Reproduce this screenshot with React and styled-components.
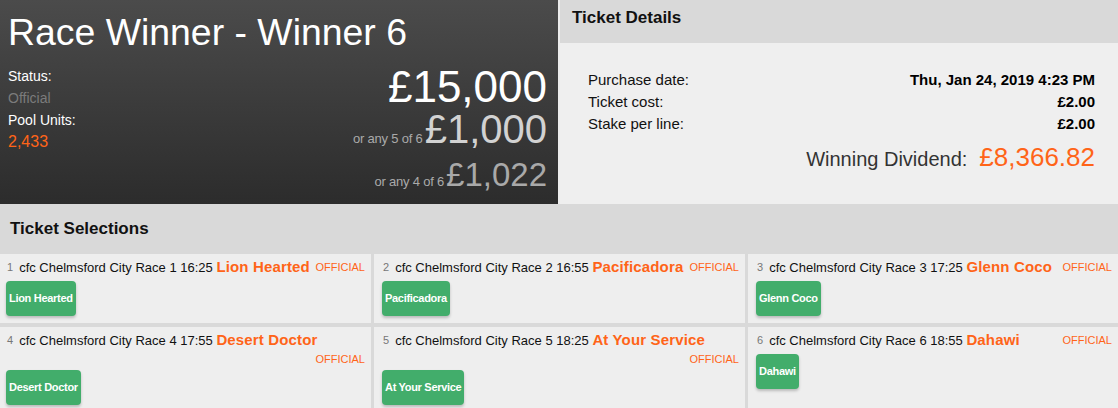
import React from 'react';
import styled, { createGlobalStyle } from 'styled-components';

const orange = '#ff6418';

const selections = [
  { n: 1, race: 'cfc Chelmsford City Race 1 16:25', horse: 'Lion Hearted' },
  { n: 2, race: 'cfc Chelmsford City Race 2 16:55', horse: 'Pacificadora' },
  { n: 3, race: 'cfc Chelmsford City Race 3 17:25', horse: 'Glenn Coco' },
  { n: 4, race: 'cfc Chelmsford City Race 4 17:55', horse: 'Desert Doctor' },
  { n: 5, race: 'cfc Chelmsford City Race 5 18:25', horse: 'At Your Service' },
  { n: 6, race: 'cfc Chelmsford City Race 6 18:55', horse: 'Dahawi' },
];

const App = () => {
  return (
    <>
      <GlobalStyle />
      <Top>
        <Summary>
          <Title>Race Winner - Winner 6</Title>
          <SummaryBody>
            <StatusList>
              <div>Status:</div>
              <StatusValue color="#7b7b7b">Official</StatusValue>
              <div>Pool Units:</div>
              <StatusValue color={orange} big>2,433</StatusValue>
            </StatusList>
            <Payouts>
              <Payout size={44} color="#ffffff">£15,000</Payout>
              <Payout size={40} color="#d2d2d2">
                <Qualifier>or any 5 of 6</Qualifier>£1,000
              </Payout>
              <Payout size={33} color="#a9a9a9" gap={9}>
                <Qualifier>or any 4 of 6</Qualifier>£1,022
              </Payout>
            </Payouts>
          </SummaryBody>
        </Summary>
        <Details>
          <DetailsHeader>Ticket Details</DetailsHeader>
          <DetailsBody>
            <DetailRow>
              <span>Purchase date:</span>
              <b>Thu, Jan 24, 2019 4:23 PM</b>
            </DetailRow>
            <DetailRow>
              <span>Ticket cost:</span>
              <b>£2.00</b>
            </DetailRow>
            <DetailRow>
              <span>Stake per line:</span>
              <b>£2.00</b>
            </DetailRow>
            <Dividend>
              <DividendLabel>Winning Dividend:</DividendLabel>
              <DividendAmount>£8,366.82</DividendAmount>
            </Dividend>
          </DetailsBody>
        </Details>
      </Top>
      <Selections>
        <SectionTitle>Ticket Selections</SectionTitle>
        <Grid>
          {selections.map((s) => (
            <Card key={s.n} first={s.n % 3 === 1}>
              <CardHead>
                <Num>{s.n}</Num>
                {s.race} <Horse>{s.horse}</Horse>
                <Official>OFFICIAL</Official>
              </CardHead>
              <Picks>
                <Pick>{s.horse}</Pick>
              </Picks>
            </Card>
          ))}
        </Grid>
      </Selections>
    </>
  );
};

export default App;

const GlobalStyle = createGlobalStyle`
  html, body {
    margin: 0;
    padding: 0;
  }
  body {
    width: 1118px;
    height: 408px;
    overflow: hidden;
    background: #d9d9d9;
    font-family: "Liberation Sans", Arial, sans-serif;
    color: #111;
  }
  * {
    box-sizing: border-box;
  }
`
const Top = styled.div`
  display: flex;
  gap: 2px;
  height: 204px;
  background: #ececec;
`
const Summary = styled.div`
  width: 558px;
  padding: 10px 11px 0 8px;
  background: linear-gradient(#4b4b4b, #2c2c2c);
  color: #fff;
`
const Title = styled.h1`
  margin: 0 0 11px;
  font-size: 37.4px;
  font-weight: normal;
  line-height: 44px;
`
const SummaryBody = styled.div`
  display: flex;
  justify-content: space-between;
`
const StatusList = styled.div`
  font-size: 14px;
  line-height: 22px;
`
const StatusValue = styled.div`
  color: ${(p) => p.color};
  font-size: ${(p) => (p.big ? 16 : 14)}px;
`
const Payouts = styled.div`
  text-align: right;
`
const Payout = styled.div`
  font-size: ${(p) => p.size}px;
  line-height: ${(p) => p.size}px;
  color: ${(p) => p.color};
  margin-top: ${(p) => p.gap || 0}px;
`
const Qualifier = styled.span`
  font-size: 13px;
  line-height: 13px;
  color: #aaa;
  letter-spacing: -0.2px;
  margin-right: 2px;
`
const Details = styled.div`
  flex: 1;
  display: flex;
  flex-direction: column;
  background: #efefef;
`
const DetailsHeader = styled.div`
  height: 43px;
  padding: 8px 12px 0;
  background: #d9d9d9;
  font-size: 17px;
  font-weight: bold;
  line-height: 20px;
`
const DetailsBody = styled.div`
  padding: 26px 23px 0 28px;
`
const DetailRow = styled.div`
  display: flex;
  justify-content: space-between;
  font-size: 15px;
  line-height: 22px;

  b {
    color: #000;
  }
`
const Dividend = styled.div`
  display: flex;
  justify-content: flex-end;
  align-items: baseline;
  margin-top: 7px;
  line-height: 30px;
`
const DividendLabel = styled.span`
  font-size: 20px;
  color: #333;
`
const DividendAmount = styled.span`
  margin-left: 12px;
  font-size: 26px;
  color: ${orange};
`
const Selections = styled.div`
  padding-top: 15px;
`
const SectionTitle = styled.div`
  padding-left: 10px;
  margin-bottom: 15px;
  font-size: 17px;
  font-weight: bold;
  line-height: 20px;
`
const Grid = styled.div`
  display: grid;
  grid-template-columns: 371px 371px 1fr;
  gap: 4px 3px;
`
const Card = styled.div`
  background: #eeeeee;
  padding: 4px 6px 7px ${(p) => (p.first ? 6 : 8)}px;
`
const CardHead = styled.div`
  font-size: 13px;
  line-height: 18px;
  color: #111;
`
const Num = styled.span`
  font-size: 11px;
  color: #777;
  margin-right: 6px;
  margin-left: 1px;
  vertical-align: 1px;
`
const Horse = styled.span`
  font-size: 15px;
  font-weight: bold;
  letter-spacing: 0.15px;
  color: ${orange};
`
const Official = styled.span`
  float: right;
  margin: 2px 0 0 5px;
  font-size: 11px;
  line-height: 14px;
  color: ${orange};
`
const Picks = styled.div`
  clear: both;
  display: flex;
  gap: 4px;
  padding-top: 4px;
`
const Pick = styled.div`
  height: 35px;
  padding: 0 3px;
  border-radius: 4px;
  background: #42ad6b;
  box-shadow: 0 2px 3px rgba(0, 0, 0, 0.22);
  color: #fff;
  font-size: 11px;
  font-weight: bold;
  letter-spacing: -0.3px;
  line-height: 35px;
  white-space: nowrap;
`
